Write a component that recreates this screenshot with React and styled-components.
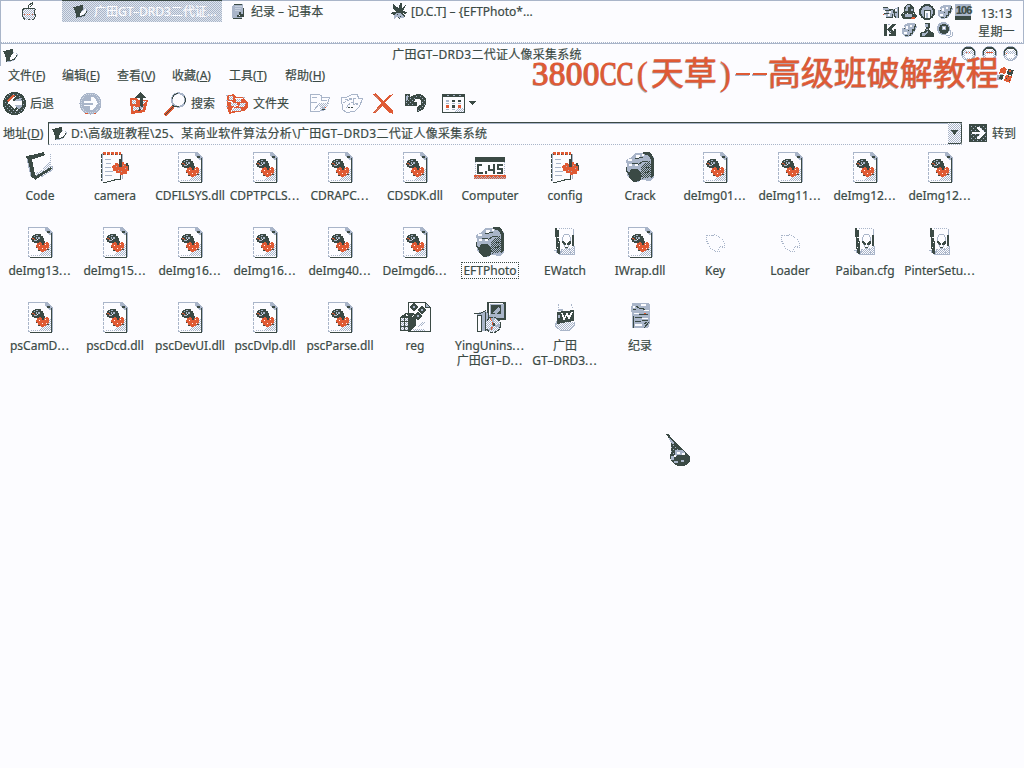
import React from "react";
import styled, { createGlobalStyle } from "styled-components";

const K = "#3b4a45";
const G = "#a9b5c9";
const R = "#df5a34";
const W = "#fcfcff";

const GlobalStyle = createGlobalStyle`
  html, body { margin: 0; padding: 0; background: ${W}; }
  body {
    width: 1024px; height: 768px; overflow: hidden;
    color: ${K};
    font-family: "Noto Sans", "Noto Sans CJK SC", sans-serif;
    font-size: 12px;
    line-height: 15px;
    -webkit-text-stroke: 0.2px currentColor;
  }
  * { box-sizing: border-box; }
  svg { display: block; flex: none; }
`;

const Screen = styled.div`
  position: relative;
  width: 1024px;
  height: 768px;
  overflow: hidden;
  background: ${W};
`;

const TaskBar = styled.header`
  display: flex;
  height: 44px;
  border-top: 1px solid ${G};
  border-left: 1px solid ${G};
  border-right: 1px solid ${G};
  background: repeating-linear-gradient(90deg, ${G} 0 1px, ${W} 1px 2px) 0 41px / 100% 1px no-repeat,
    linear-gradient(${G}, ${G}) 0 42px / 100% 1px no-repeat;
`;

const AppleSlot = styled.div`
  width: 61px;
  padding: 1px 0 0 20px;
`;

const TaskButton = styled.div`
  display: flex;
  align-items: center;
  gap: ${(p) => p.$gap || 5}px;
  width: ${(p) => p.$w}px;
  height: 21px;
  padding: 0 0 1px ${(p) => p.$pad || 8}px;
  white-space: nowrap;
  ${(p) =>
    p.$active &&
    `margin-top: -1px; height: 22px; border-top: 1px solid ${K}; color: ${W};
     background: conic-gradient(${G} 25%, #dfe5ee 0 50%, ${G} 0 75%, #dfe5ee 0) 0 0 / 2px 2px;`}
`;

const Tray = styled.div`
  display: grid;
  grid-template-columns: repeat(5, 18px);
  grid-auto-rows: 18px;
  margin-left: auto;
  padding-top: 3px;
  width: 90px;
`;

const Clock = styled.div`
  width: 50px;
  padding: 4px 3px 0 0;
  text-align: center;
  line-height: 18px;
  letter-spacing: 0.2px;
`;

const TitleBar = styled.div`
  display: flex;
  align-items: center;
  height: 22px;
  padding: 0 7px 0 2px;
  border-left: 1px solid ${G};
`;

const WindowTitle = styled.div`
  flex: 1;
  padding: 0 6px 2px 0;
  text-align: center;
  letter-spacing: 0.27px;
`;

const WindowButtons = styled.div`
  display: flex;
  gap: 6px;
  margin: -3px -1px 0 0;
`;

const MenuBar = styled.nav`
  display: flex;
  align-items: center;
  height: 20px;
  padding: 0 0 1px 8px;
`;

const MenuItem = styled.span`
  width: ${(p) => p.$w}px;
  white-space: nowrap;
  u { text-underline-offset: 1px; }
`;

const ToolBar = styled.div`
  display: flex;
  align-items: center;
  height: 35px;
  padding-left: 3px;
`;

const Tool = styled.div`
  display: flex;
  align-items: center;
  gap: 4px;
  width: ${(p) => p.$w}px;
  white-space: nowrap;
`;

const AddressBar = styled.div`
  display: flex;
  align-items: center;
  height: 24px;
  padding-left: 3px;
`;

const AddressLabel = styled.span`
  width: 45px;
  letter-spacing: 0.1px;
`;

const AddressField = styled.div`
  display: flex;
  align-items: center;
  width: 914px;
  height: 23px;
  padding-left: 3px;
  border-top: 1px solid ${K};
  border-left: 1px solid ${K};
  border-bottom: 1px dotted ${G};
  box-shadow: inset 0 1px ${G};
`;

const Path = styled.span`
  flex: 1;
  padding-left: 3px;
  letter-spacing: 0.31px;
`;

const DropButton = styled.div`
  display: flex;
  align-items: center;
  justify-content: center;
  width: 14px;
  height: 21px;
  border-right: 1px solid ${K};
  border-bottom: 1px solid ${K};
  border-radius: 0 2px 2px 0;
  background: conic-gradient(${G} 25%, ${W} 0 50%, ${G} 0 75%, ${W} 0) 0 0 / 2px 2px;
`;

const Go = styled.div`
  display: flex;
  align-items: center;
  gap: 5px;
  padding-left: 7px;
`;

const Files = styled.main`
  display: grid;
  grid-template-columns: repeat(13, 75px);
  grid-auto-rows: 75px;
  padding: 6px 0 0 2px;
`;

const File = styled.figure`
  display: flex;
  flex-direction: column;
  align-items: center;
  gap: 5px;
  margin: 0;
  padding-left: 1px;
`;

const Caption = styled.figcaption`
  padding: 0 1px;
  text-align: center;
  white-space: pre;
  line-height: 15px;
  outline: ${(p) => (p.$focus ? `1px dotted ${K}` : "none")};
`;

const Dots = styled.span`
  letter-spacing: 1px;
`;

const Banner = styled.div`
  position: absolute;
  left: 532px;
  top: 55px;
  display: flex;
  height: 38px;
  line-height: 38px;
  color: ${R};
  font-family: "Liberation Serif", "Noto Sans CJK SC", serif;
  font-size: 33px;
  text-shadow: -1px 1px 0 ${G};
  white-space: nowrap;
`;

const Digits = styled.span`
  width: 68px;
  letter-spacing: 0.5px;
  -webkit-text-stroke: 1px ${R};
`;

const Caps = styled.span`
  width: 34px;
  transform: scaleX(0.76);
  transform-origin: left;
  -webkit-text-stroke: 1px ${R};
`;

const Half = styled.span`
  width: 17px;
  text-align: center;
  -webkit-text-stroke: 0.3px ${R};
`;

const Rule = styled.span`
  width: 14px;
  height: 2px;
  margin: 18px 1.5px 0;
  background: ${R};
  box-shadow: -1px 1px 0 ${G};
`;

const Han = styled.span`
  -webkit-text-stroke: 0.5px ${R};
`;

const Flag = styled.div`
  position: absolute;
  left: 996px;
  top: 66px;
`;

const Pointer = styled.div`
  position: absolute;
  left: 665px;
  top: 433px;
`;

const PatternSheet = styled.svg`
  position: absolute;
`;

const Ico = ({ w = 32, h = w, vw = w, vh = h, children }) => (
  <svg width={w} height={h} viewBox={`0 0 ${vw} ${vh}`} shapeRendering="crispEdges">
    {children}
  </svg>
);

const Dither = ({ id, a, b }) => (
  <pattern id={id} width="2" height="2" patternUnits="userSpaceOnUse">
    <rect width="2" height="2" fill={a} />
    <path d="M0 0h1v1H0zM1 1h1v1H1z" fill={b} />
  </pattern>
);

const Patterns = () => (
  <PatternSheet width="0" height="0">
    <defs>
      <Dither id="kg" a={K} b={G} />
      <Dither id="gw" a={W} b={G} />
      <Dither id="rg" a={R} b={G} />
      <pattern id="ks" width="4" height="4" patternUnits="userSpaceOnUse">
        <rect width="4" height="4" fill={K} />
        <path d="M0 0h1v1H0zM2 2h1v1H2z" fill={G} />
      </pattern>
    </defs>
  </PatternSheet>
);

const AppleIcon = () => (
  <Ico w={16} h={18}>
    <path d="M3 6h3l2 1 2-1h3l1 1v1l-1 1v3l2 1-2 4-2 1H9l-1-1-1 1H4l-2-3-1-3V9z" fill="url(#gw)" stroke={K} />
    <path d="M7 6l1-3 3-2v2L9 5" fill="none" stroke={K} />
    <path d="M3 12.500h1M6 12.500h1M8 12.500h1M11 12.500h1" stroke={R} />
  </Ico>
);

const NoteIcon = () => (
  <Ico w={16} h={15}>
    <path d="M0 3h2l1-1h3l2-1h2v4l-2 3v4l2-1v1l-3 2H3v-3l-1-4z" fill={K} />
    <path d="M7 9l6-4v2l-4 4-2 1z" fill={W} />
    <path d="M9 12h2l3-4V6l-1-1M10 4l1 1M4 13.500h4" stroke={G} fill="none" />
    <path d="M10 11.500h1l3-4" stroke={K} fill="none" />
  </Ico>
);

const NotepadIcon = () => (
  <Ico w={15} h={17}>
    <path d="M3 1h9v12l-1 2H1V3h1z" fill={G} />
    <path d="M4 3.500h7M4 5.500h6M4 7.500h5" stroke="#c6d0de" />
    <path d="M3 1.500h8M12.500 5v9M2 15.500h9" stroke={K} fill="none" />
    <path d="M8 9h2v2h2v3H6v-2h2z" fill={K} /><path d="M8 12h1v1H8z" fill={W} />
  </Ico>
);

const SplatIcon = () => (
  <Ico w={17} h={17}>
    <path d="M2 1l4 3 2 1 1-5h2v5l4-3-2 4-2 2 5 1-1 2-4-1 4 3-2 1-3-1-1 3-3-2-3 2 1-4-4-1 1-2h4L2 5z" fill={K} />
    <path d="M5 10h4l4 3v2H9l-3-1-3 2v-3z" fill={G} /><path d="M6 11h1v1H6zM9 13h1v1H9z" fill={K} />
  </Ico>
);

const CameraTray = () => (
  <Ico w={17}>
    <path d="M0 3h5l1 2h5l4-2v11h-2l-2-3-2 3H3v-3H1V9h2V6H0z" fill={G} />
    <path d="M0 3.500h5M2 6.500h6M1 9.500h5M3 13.500h6l1-3M6 5l4 1v3M11 5v6l2 3M15.500 3v11M12 8h2" stroke={K} fill="none" />
    <path d="M6 7h2v2H6zM12 5h2v2h-2zM5 10h2v2H5z" fill={W} /><path d="M0 10h1v1H0z" fill={R} />
  </Ico>
);
const PenguinTray = () => (
  <Ico w={17}>
    <path d="M6 0h4l3 4v3l3 5-3 3H2l-2-4 3-4V4z" fill={K} />
    <path d="M6 1h3v2H7v4H4l1-4zM4 10h7v3H4zM10 5h2v2h-2z" fill={G} /><path d="M2 9h1v1H2zM12 9h1v1h-1zM6 9h1v1H6z" fill={W} />
    <path d="M11 13h3v2h-4z" fill={R} />
  </Ico>
);
const HomeTray = () => (
  <Ico w={17}>
    <circle cx="8" cy="8" r="7" fill={G} stroke={K} strokeWidth="2" />
    <path d="M5 6h6v8H5z" fill={W} stroke={K} /><path d="M7 9h2v5H7z" fill={G} />
  </Ico>
);
const CloudTray = () => (
  <Ico w={17}>
    <path d="M3 3l4-2h7l2 4-2 4-3 5-7 1-3-4V6h3z" fill={G} />
    <path d="M5 4h2v3H5zM3 10h3v2H3zM9 3h2v2H9z" fill={W} />
    <path d="M14 2h1v3h-1v4h-2v3h-2v2H8v-1h1v-2h2V7h2zM7 8h1v1H7zM4 13h3v1H4zM3 6h1v1H3z" fill={K} />
  </Ico>
);
const CounterIcon = styled.div`
  width: 16px;
  height: 16px;
  padding-left: 1px;
  border-bottom: 4px solid ${K};
  background: ${G};
  color: ${K};
  font: bold 11px/12px "Liberation Sans", sans-serif;
  letter-spacing: -1px;
`;
const KTray = () => (
  <Ico w={17}>
    <path d="M1 2h3v5l5-5h4L8 7l3 2V7h2v7H6v-2h3L4 8v6H1z" fill={K} />
    <path d="M5 2.500h2M6 11l2-2" stroke={G} fill="none" />
  </Ico>
);
const PersonTray = () => (
  <Ico w={17}>
    <path d="M6 1h5v4l-1 2 1 2 4 2v4H1v-4l5-2 1-3-1-1z" fill={K} />
    <path d="M6 2h3v3H6zM7 7h2l-2 4H3v3h3l3-4z" fill={G} />
  </Ico>
);
const SpeakerTray = () => (
  <Ico w={17}>
    <circle cx="6.500" cy="6.500" r="6.500" fill={G} /><circle cx="7" cy="7" r="5" fill={K} />
    <circle cx="7" cy="6" r="2.500" fill={G} /><path d="M6 5h2v2H6z" fill={W} />
    <path d="M9 14l4-1 1-5M11 16l4-2 1-4" stroke={G} fill="none" />
  </Ico>
);

const WinButton = ({ mark }) => (
  <Ico w={15}>
    <circle cx="7.500" cy="7.500" r="7" fill="url(#gw)" stroke={G} />
    <path d="M1 9V5l3-4h7l3 4v4h-1V6l-2-3H4L2 6v3z" fill={K} />
    <path d="M4 8h7v4H4zM5 3h5v2H5z" fill={W} />
    <path d={mark} stroke={R} />
  </Ico>
);

const BackIcon = () => (
  <Ico w={23}>
    <circle cx="11.500" cy="11.500" r="11.500" fill={K} /><circle cx="11.500" cy="11.500" r="10.500" fill="url(#ks)" />
    <circle cx="13" cy="11" r="6.500" fill={G} />
    <path d="M10 5l3-1v3l-2 2h8v4h-8l4 4-2 2-8-7V9z" fill={W} />
    <path d="M4 8l5-5h3L5 10z" fill={R} /><path d="M6 13l6 5 2-2M10 9l3-3h3" stroke={K} fill="none" strokeWidth="1.500" />
  </Ico>
);
const ForwardIcon = () => (
  <Ico w={23}>
    <circle cx="11.500" cy="11.500" r="11" fill={G} /><circle cx="11.500" cy="11.500" r="9.500" fill="none" stroke="#d0d8e4" strokeDasharray="1 1" />
    <path d="M5 9h7V5h3l4 6.500-5 6.500h-3v-4H5z" fill={W} /><path d="M5 11h9v2H5z" fill={G} />
    <path d="M6 21.500h3M15 21.500h2" stroke={R} />
  </Ico>
);
const UpIcon = () => (
  <Ico w={20} h={23}>
    <path d="M1 6h6l2 2h10l-3 12-14 2z" fill={R} />
    <path d="M3 8h4v4H3zM12 9h5l-2 3h-3zM4 14h11l-1 5H4z" fill="url(#gw)" />
    <path d="M5 13l3 2 5-2M6 18h8l2-5" stroke={R} fill="none" />
    <path d="M11 0l7 6h-4v8l-3 5H9l2-5V6H5z" fill={K} /><path d="M11 14l2 1-2 3z" fill={G} />
  </Ico>
);
const SearchIcon = () => (
  <Ico w={24} h={24}>
    <circle cx="15.500" cy="8" r="6.800" fill={W} stroke={G} strokeWidth="2" />
    <path d="M9 7l2-4 4-2M21 4l2 4-2 4M12 14l4 1" stroke={K} fill="none" />
    <path d="M9 14l2 2-8 8-3-2z" fill={R} /><path d="M10 15l-8 8M9 13l3 2" stroke={K} />
  </Ico>
);
const FoldersIcon = () => (
  <Ico w={23}>
    <path d="M1 3h3l4-1 2 3h6l2 2 4 3v5l-3 4-8 1-8 2H3L1 15z" fill={R} />
    <path d="M3 4h4v4H3zM10 7h5v3h-5zM5 11h6v3H5zM14 11h6l-2 4h-5zM6 16h9v3H6z" fill="url(#gw)" />
    <path d="M2 9h2l3 2M5 20l3-5 4-2M9 6l8 1" stroke={W} fill="none" />
    <path d="M0 3.500h2M0 8.500h2M0 14.500h2M17 5.500h2" stroke={G} />
  </Ico>
);
const MoveIcon = () => (
  <Ico w={23}>
    <path d="M2.500 2.500h9l3 3h7l-4 12-7 2h-8z" fill={W} stroke={G} />
    <path d="M4 5h5M13 3v5h6M2 10h7M6 18l6-7h9" stroke={G} fill="none" />
    <path d="M11 11h9v4l-4 3h-4z" fill="url(#gw)" /><path d="M13 15h5l-3 2z" fill={G} /><path d="M14 17.500h3" stroke={K} /><path d="M17 15.500h1" stroke={R} />
  </Ico>
);
const CopyIcon = () => (
  <Ico w={24} h={23}>
    <path d="M1.500 5.500h5l5-3h6l1 4h4l-3 8-5 5-8 1-4-3z" fill={W} stroke={G} />
    <path d="M5 7h8v5h5M3 11l6-3M9 6l7 1M6 16l5-6 7 2" stroke={G} strokeDasharray="3 1" fill="none" />
    <path d="M8 15.500h5" stroke={K} strokeDasharray="2 1" />
  </Ico>
);
const DeleteIcon = () => (
  <Ico w={23}>
    <path d="M1 2l3-1 7 8 7-6 3-1-8 9 8 8v3l-3-1-8-7-6 7H1l8-10z" fill={R} />
    <path d="M3 3l4 5M3 20l5-5" stroke="#c77f6c" />
  </Ico>
);
const UndoIcon = () => (
  <Ico w={23}>
    <path d="M1 2h4v5l4-3 7-2 5 4 1 5-3 6-6 3v-4l4-3 1-4-3-3-4 1-2 3h3v3H1z" fill="url(#ks)" stroke={K} />
    <path d="M2 4l2-1v4L2 9z" fill={G} />
  </Ico>
);
const ViewIcon = () => (
  <Ico w={34} h={20}>
    <rect x="0.500" y="0.500" width="22" height="18" fill={W} stroke={K} /><path d="M0 0h23v3H0z" fill={K} />
    <path d="M5 1.500h2M11 1.500h2M17 1.500h2" stroke={G} />
    <path d="M4 6h3v2H4z" fill={G} /><path d="M10 6h3v2h-3zM16 6h3v2h-3zM10 11h3v3h-3z" fill={K} />
    <path d="M4 11h3v3H4zM16 11h3v3h-3z" fill={R} /><path d="M4 9.500h3M10 9.500h3M16 9.500h3M4 15.500h3M10 15.500h3" stroke={G} /><path d="M15 14h7v4h-9z" fill="url(#gw)" />
    <path d="M26 7h8l-4 4z" fill={K} />
  </Ico>
);
const GoIcon = () => (
  <Ico w={18}>
    <rect width="18" height="18" rx="1" fill={K} /><path d="M1 1h16v16H1z" fill="url(#ks)" />
    <path d="M3 8h8L8 5V3h2l6 6-6 6H8v-2l3-3H3z" fill={W} />
  </Ico>
);

const FolderFile = () => (
  <Ico>
    <path d="M7 7l19-4 1 2-1 14-14 6z" fill={W} />
    <path d="M26 3v14" stroke={G} strokeDasharray="1 1" />
    <path d="M12 22l14-7 1 3-15 8zM17 18l9-8v9z" fill="url(#gw)" />
    <path d="M2 5l6-1 12-3 1 3-11 4H8l3 15 3 4-3 1-4-2z" fill={K} />
    <path d="M10 26l17-10 1 2-17 11z" fill={K} /><path d="M26 15h2v4l-11 7M3 8l4 17" stroke={G} fill="none" />
  </Ico>
);
const DllFile = () => (
  <Ico>
    <path d="M4 1h18l6 6v25H4z" fill={W} />
    <path d="M4.500 1v30" stroke={G} strokeDasharray="3 1" />
    <path d="M5 1.500h17" stroke={G} /><path d="M18 26l9-8v12H7v-1h9z" fill="url(#gw)" />
    <path d="M21 1h2l5 5v3h-3l-4-4z" fill={G} /><path d="M23 5h3v2h-3z" fill={K} />
    <path d="M27.500 7v24H6" stroke={K} fill="none" /><path d="M28.500 6v25M5 30.500h1" stroke={G} />
    <path d="M8 10h1V9h2V8h6v2h2v2h1v5h-2v2h-3v-1h-3v-1h-2v-1H8v-2H7v-2h1z" fill={K} />
    <path d="M12 9h2v1h-2zM10 10h1v1h-1zM14 11h2v2h-2zM10 14h3v1h-3zM12 11h1v2h-1z" fill={G} />
    <path d="M8 12h2v1H8zM10 13h1v1h-1z" fill={R} /><path d="M13 13h1v1h-1z" fill={W} />
    <path d="M13 17h2v-1h2v1h1v2h2v-2h2v-1h2v1h1v5h-1v2h-2v1h-2v1h-3v-1h-2v-1h-1v-2h-2v-3h1z" fill={R} />
    <path d="M17 15h4v2h-1v2h-2v-2h-1z" fill={K} /><path d="M15 19h1v1h-1zM21 18h1v1h-1zM18 22h1v1h-1zM22 22h1v1h-1zM12 17h1v1h-1z" fill={W} />
    <path d="M14 24h2v1h-2zM23 23h2v1h-2zM12 21h1v1h-1z" fill={K} />
  </Ico>
);
const IniFile = () => (
  <Ico>
    <path d="M3 3l20-1-2 26-18 3z" fill={W} />
    <path d="M3.500 2v28" stroke={G} /><path d="M2.500 3v27" stroke={K} strokeDasharray="4 1" /><path d="M4 2.500h18" stroke={R} strokeWidth="3" strokeDasharray="3 1" /><path d="M4 3.500h18" stroke={K} strokeDasharray="1 3" />
    <path d="M22.500 3v5M21.500 22v6l-6 1-11 3H3" stroke={K} fill="none" /><path d="M23.500 3v25" stroke={G} />
    <path d="M6 8.500h6M7 12.500h5M6 16.500h6M6 20.500h8M6 24.500h7" stroke={G} />
    <path d="M14 14h2v-2h3v1h1v-2h5v2h3l2 3v4h-2v3h-4v1h-3v-2h-4v-2h-3v-3h-1z" fill={R} />
    <path d="M20 8h3v8h-3zM27 12h2v2h1v5h-1v-4h-2z" fill={K} /><path d="M17 15h1v1h-1zM24 14h1v1h-1zM19 19h1v1h-1zM26 17h1v1h-1zM22 20h1v1h-1z" fill={G} />
  </Ico>
);
const ComputerFile = () => (
  <Ico>
    <rect x="1.500" y="7.500" width="29" height="18" fill={W} stroke={G} strokeDasharray="1 1" />
    <path d="M1 6h30v5H1z" fill={K} />
    <path d="M8 14H4v8h5M12 20v3M15 14v5h5M20 13v10M29 14h-5v4h4v4h-5" stroke={K} strokeWidth="2" fill="none" />
    <path d="M0 24h32v4H0z" fill="url(#rg)" /><path d="M0 24h32v2H0z" fill={R} /><path d="M3 25.500h27" stroke={G} strokeDasharray="1 3" />
  </Ico>
);
const CameraFile = () => (
  <Ico>
    <path d="M2 9l6-3 3-4h8l3-1 5 1 3 5v19l-4 4-9-1-3 2-6-1-5-5V15z" fill={G} />
    <path d="M4 8h4v2H4zM12 4h4v3h-4zM11 13h3v2h-3zM5 13h3v2H5zM18 3h2v2h-2z" fill={W} />
    <path d="M19 1h6l3 3 2 4v16l-3 4V9l-2-4-6-2z" fill={K} />
    <path d="M17 17l3-4 6-3 1 5v11l-9 2z" fill="url(#kg)" /><path d="M8 12h6M2 16v4l4 3M11 8l8-2M14 14l5-4h5M22 17l4-1M21 22l5-2" stroke={K} fill="none" />
    <path d="M7 18h6l4 3v2l1 2-2 5-6 1-4-3-2-5 2-3z" fill={K} />
  </Ico>
);
const AlienFile = () => (
  <Ico>
    <path d="M7 2h17v26l-14 1z" fill={W} />
    <path d="M10 2.500h13" stroke={G} strokeDasharray="1 1" />
    <path d="M6 2h2v2h2l1 22h1v3h-2l-2-2-1-8zM23 9h2v11h-2z" fill={K} /><path d="M8 11h2v1H8zM9 16h1v1H9zM8 21h1v1H8z" fill={W} />
    <path d="M5 24.500h2v2M10 29l10-1h5v-8M24.500 3v6M13 23l-2 5h11l-2-6" stroke={G} fill="url(#gw)" />
    <path d="M13.500 11.500l2-3h4l2 3v4l-3 7h-2l-3-7z" fill={W} stroke={G} />
    <path d="M13 15h2l2 3v1h-2l-2-2zM22 15h-2l-2 3v1h2l2-2zM16 21h3v1h-3z" fill={K} />
  </Ico>
);
const FaintFile = () => (
  <Ico>
    <path d="M7.500 9.500h6l2-1 3 2 4 1 2 3 1 3v4l-4-1-2 2 1 3h-4l-4-2-3-5-2-4z" fill="none" stroke={G} strokeDasharray="1 1" />
  </Ico>
);
const RegFile = () => (
  <Ico>
    <path d="M9.500 1.500h17l5 5v24h-22z" fill={W} stroke={K} /><path d="M26.500 1.500v5h5z" fill={G} stroke={K} />
    <path d="M18 26l5-5h5l-5 4zM14 28h12v2H14z" fill="url(#gw)" />
    <path d="M1 16l6-4h8l2 3v9l-6 6H1z" fill={K} /><path d="M2 17h3v3H2zM6 17h3v3H6zM2 21h3v4H2zM6 21h3v4H6zM2 26h3v3H2zM6 26h3v3H6z" fill="url(#gw)" />
    <path d="M5 14l3-1 1 2zM12 15l3-1-1 3z" fill={W} />
    <path d="M15 3l3 3-3 3-3-3zM23 6l3 3-3 3-3-3zM19 12l3 3-3 3-3-3z" fill={G} stroke={K} strokeWidth="1.500" />
  </Ico>
);
const SetupFile = () => (
  <Ico>
    <path d="M13.500 1.500h17v16h-15l-2-2z" fill={G} stroke={K} strokeWidth="2" /><path d="M15 2.500h14M15.500 3v11" stroke={W} /><path d="M17 4h10v9H17z" fill={K} /><path d="M18 12l7-7 1 4-3 4z" fill={G} />
    <path d="M3 12l8-2 3 2v18H4z" fill={G} /><path d="M3 14h4v16H3z" fill={W} stroke={K} /><path d="M0 12.500h6l6-3M11.500 11v19M14 12v5" stroke={K} fill="none" />
    <circle cx="19" cy="24" r="7.500" fill="url(#gw)" stroke={K} strokeDasharray="3 1" /><path d="M19 24l-2-7h4zM19 24l7-1-1 4zM19 24l-4 5h4z" fill={G} /><path d="M16 17l3 6-2 7" stroke={R} fill="none" strokeDasharray="3 2" /><path d="M19 22h2v3h-2z" fill={K} />
  </Ico>
);
const WordPadFile = () => (
  <Ico>
    <path d="M9.500 3v4M22.500 3l1 5" stroke={G} strokeDasharray="2 1" />
    <path d="M9 9l14-2 2 2v16l-3 4H10l-4-3 2-5z" fill={W} />
    <path d="M8 20l-2 5 5 4h10l4-4v-4" stroke={G} fill="url(#gw)" /><path d="M8 11l17-2v11l-17 3z" fill={K} />
    <path d="M13 12l2 6 3-5 2 4 3-6" stroke={W} strokeWidth="1.500" fill="none" /><path d="M9 14h2v3H9zM9 8h5v2H9z" fill={G} />
  </Ico>
);
const NotesFile = () => (
  <Ico>
    <path d="M8 2h17l1 2v18l-2 5H8V14l-1-6z" fill={G} /><path d="M17 3h5v2h-5zM20 9h5v1h-5zM10 12h5v1h-5zM11 23h7v2h-7zM9 5h2v2H9zM18 17h6v1h-6z" fill={W} />
    <path d="M12 5l3 2h3l3 2M9 15v12M15 13.500h9M11 16.500h7M18 19.500h6M11 20.500h6M20 23l3-2M20 27l5-6M9 8.500h3" stroke={K} fill="none" />
    <path d="M20 12.500h2" stroke={R} />
  </Ico>
);
const FlagIcon = () => (
  <Ico w={19} h={20}>
    <path d="M5 2l3-1 3 2-2 5-4-1-2 1z" fill={R} /><path d="M12 3l6 1-2 6-5-2z" fill={K} /><path d="M13 4h2v2h-2z" fill={R} />
    <path d="M1 9l6-1-2 6H1z" fill={G} /><path d="M4 9h4l-2 5-3-1z" fill={K} /><path d="M10 9l6 1-2 7-6-2z" fill={R} /><path d="M10 12h1v1h-1zM13 14h1v1h-1zM12 10h1v1h-1z" fill={K} />
  </Ico>
);
const DropPointer = () => (
  <Ico w={26} h={34}>
    <path d="M1 1h2l2 2 9 10 7 6 4 5v4l-3 4-5 1h-4l-5-3-3-5 1-7V9L3 4z" fill={K} />
    <path d="M6 11h3l5 5-3 4-5 1z" fill="url(#ks)" /><path d="M4 5l2 1 3 4-1 2-3-4z" fill={G} />
    <path d="M10 17h8l2 3v2h-7l-3 2zM6 23h3v4H6zM9 28h4v2H9zM16 27h3v2h-3z" fill={G} /><path d="M12 19h3v2h-3zM9 22h2v2H9zM17 20h3v2h-3z" fill={W} />
  </Ico>
);

const files = [
  ["Code", FolderFile], ["camera", IniFile], ["CDFILSYS.dll", DllFile], ["CDPTPCLS...", DllFile],
  ["CDRAPC...", DllFile], ["CDSDK.dll", DllFile], ["Computer", ComputerFile], ["config", IniFile],
  ["Crack", CameraFile], ["deImg01...", DllFile], ["deImg11...", DllFile], ["deImg12...", DllFile],
  ["deImg12...", DllFile], ["deImg13...", DllFile], ["deImg15...", DllFile], ["deImg16...", DllFile],
  ["deImg16...", DllFile], ["deImg40...", DllFile], ["DeImgd6...", DllFile], ["EFTPhoto", CameraFile],
  ["EWatch", AlienFile], ["IWrap.dll", DllFile], ["Key", FaintFile], ["Loader", FaintFile],
  ["Paiban.cfg", AlienFile], ["PinterSetu...", AlienFile], ["psCamD...", DllFile], ["pscDcd.dll", DllFile],
  ["pscDevUI.dll", DllFile], ["pscDvlp.dll", DllFile], ["pscParse.dll", DllFile], ["reg", RegFile],
  ["YingUnins...\n广田GT–D...", SetupFile], ["广田\nGT–DRD3...", WordPadFile], ["纪录", NotesFile],
];

const menus = [
  ["文件", "F", 54], ["编辑", "E", 55], ["查看", "V", 55],
  ["收藏", "A", 57], ["工具", "T", 56], ["帮助", "H", 50],
];

const FileName = ({ text }) =>
  text.split(/(\.\.\.)/).map((part, i) => (part === "..." ? <Dots key={i}>...</Dots> : part));

export default function App() {
  return (
    <Screen>
      <GlobalStyle />
      <Patterns />
      <TaskBar>
        <AppleSlot><AppleIcon /></AppleSlot>
        <TaskButton $w={160} $active $pad={11} $gap={5}><NoteIcon />广田GT–DRD3二代证...</TaskButton>
        <TaskButton $w={161} $pad={9}><NotepadIcon />纪录 – 记事本</TaskButton>
        <TaskButton $w={170} $pad={8} $gap={3}><SplatIcon />[D.C.T] – {"{EFTPhoto*..."}</TaskButton>
        <Tray>
          <CameraTray /><PenguinTray /><HomeTray /><CloudTray /><CounterIcon>106</CounterIcon>
          <KTray /><CloudTray /><PersonTray /><SpeakerTray />
        </Tray>
        <Clock>13:13<br />星期一</Clock>
      </TaskBar>
      <TitleBar>
        <NoteIcon />
        <WindowTitle>广田GT–DRD3二代证人像采集系统</WindowTitle>
        <WindowButtons>
          <WinButton mark="M5 6.500h1M8 6.500h1" /><WinButton mark="M4 6.500h7" /><WinButton mark="M3 7.500h1" />
        </WindowButtons>
      </TitleBar>
      <MenuBar>
        {menus.map(([name, key, w]) => (
          <MenuItem key={key} $w={w}>{name}(<u>{key}</u>)</MenuItem>
        ))}
      </MenuBar>
      <ToolBar>
        <Tool $w={76}><BackIcon />后退</Tool>
        <Tool $w={50}><ForwardIcon /></Tool>
        <Tool $w={34}><UpIcon /></Tool>
        <Tool $w={63}><SearchIcon />搜索</Tool>
        <Tool $w={82}><FoldersIcon />文件夹</Tool>
        <Tool $w={32}><MoveIcon /></Tool>
        <Tool $w={32}><CopyIcon /></Tool>
        <Tool $w={32}><DeleteIcon /></Tool>
        <Tool $w={38}><UndoIcon /></Tool>
        <Tool $w={40}><ViewIcon /></Tool>
      </ToolBar>
      <AddressBar>
        <AddressLabel>地址(<u>D</u>)</AddressLabel>
        <AddressField>
          <NoteIcon />
          <Path>D:\高级班教程\25、某商业软件算法分析\广田GT–DRD3二代证人像采集系统</Path>
          <DropButton><Ico w={7} h={5}><path d="M0 0h7L3.500 5z" fill={K} /></Ico></DropButton>
        </AddressField>
        <Go><GoIcon />转到</Go>
      </AddressBar>
      <Files>
        {files.map(([name, Icon], i) => (
          <File key={i}>
            <Icon />
            <Caption $focus={name === "EFTPhoto"}><FileName text={name} /></Caption>
          </File>
        ))}
      </Files>
      <Banner>
        <Digits>3800</Digits>
        <Caps>CC</Caps>
        <Half>(</Half><Han>天草</Han><Half>)</Half>
        <Rule /><Rule />
        <Han>高级班破解教程</Han>
      </Banner>
      <Flag><FlagIcon /></Flag>
      <Pointer><DropPointer /></Pointer>
    </Screen>
  );
}
